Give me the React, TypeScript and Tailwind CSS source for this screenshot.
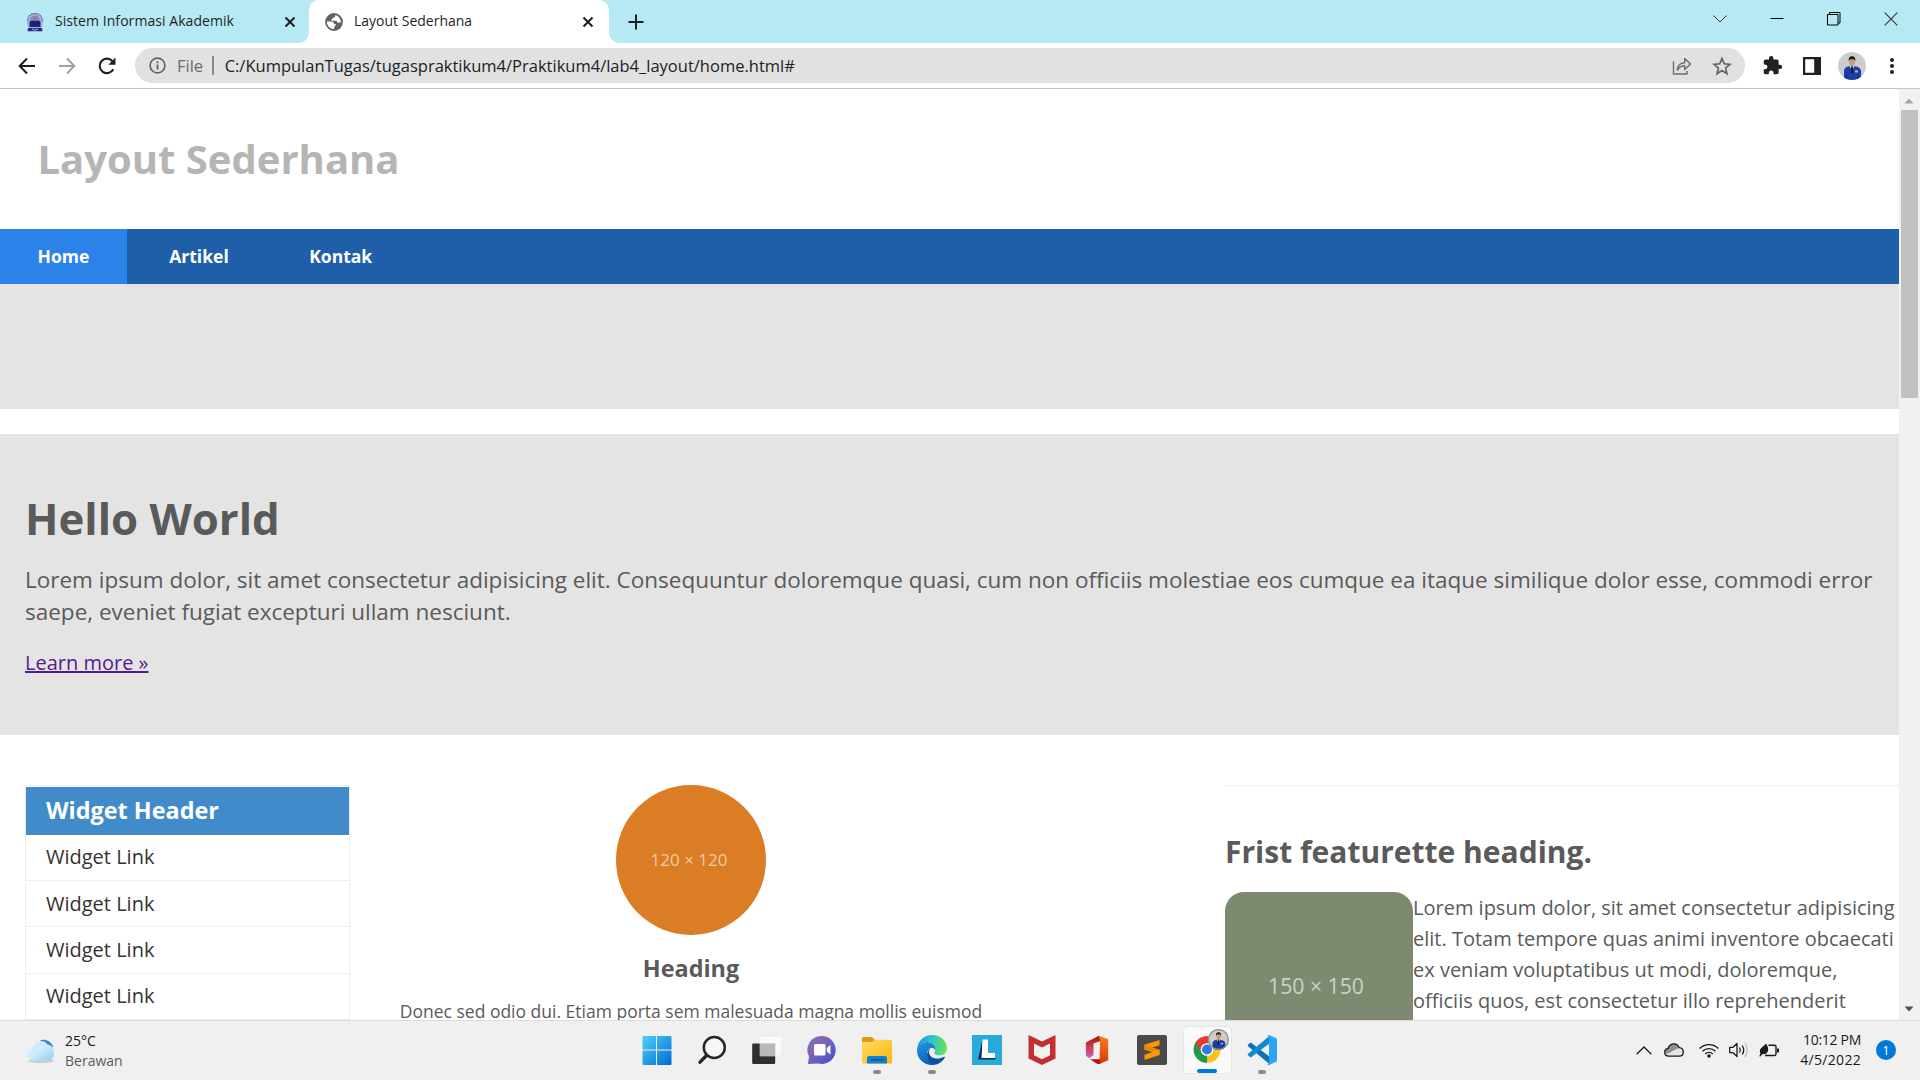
import React from "react";

/* ---------- Browser chrome icons ---------- */

const CloseX = () => (
  <svg width="12" height="12" viewBox="0 0 12 12" className="block">
    <path d="M1.5 1.5L10.5 10.5M10.5 1.5L1.5 10.5" stroke="#1f1f1f" strokeWidth="2" />
  </svg>
);

const Crest = () => (
  <svg width="20" height="20" viewBox="0 0 20 20" className="block">
    <path d="M10 0.8C5 0.8 1.8 4.6 1.8 9c0 3 .8 5.500 2 7h12.400c1.200-1.500 2-4 2-7C18.200 4.600 15 .8 10 .8z" fill="#a9b3d8" />
    <path d="M10 1.500C5.600 1.500 2.600 5 2.600 9M10 1.500c4.400 0 7.400 3.500 7.400 7.500" stroke="#5d68a5" strokeWidth="1.200" strokeDasharray="1.500 1" fill="none" />
    <circle cx="10" cy="8.200" r="4.800" fill="#7f8cc4" />
    <path d="M4.500 9.500l3.500-1 2 .8 2-.8 3.500 1V15h-11z" fill="#1d1f7c" />
    <path d="M9 8.500L10 4l1 4.500z" fill="#e2572b" />
    <path d="M3 16h14l.5 3.200h-15z" fill="#252a86" />
    <path d="M7 17l3 1.300L13 17" stroke="#d6daf0" strokeWidth=".8" fill="none" />
  </svg>
);

const Globe = () => (
  <svg width="18" height="18" viewBox="0 0 18 18" className="block">
    <circle cx="9" cy="9" r="8.900" fill="#5f6368" />
    <path d="M10.200 1.900c.6 1.500-.3 2.300-1.600 2.500-.9.200-.6 1.500-1.500 1.700-.9.200-1.200.9-.5 1.600h4c1 0 1.700.9 1.700 1.900 1.300 0 2 .2 3.600-.4 0-3.500-2.400-6.500-5.700-7.300z" fill="#fff" />
    <path d="M1.900 8.500h4.300c1.800 0 2.900 1.200 2.900 2.600h1.600c.6 1.800-1.600 2-1.700 5-4 0-7.100-3.200-7.100-7.600z" fill="#fff" />
  </svg>
);

const BackArrow = ({ color }: { color: string }) => (
  <svg width="18" height="18" viewBox="0 0 18 18" className="block">
    <path d="M17 9H2M9 1.500L1.700 9 9 16.500" stroke={color} strokeWidth="2" fill="none" />
  </svg>
);

const Reload = () => (
  <svg width="20" height="20" viewBox="0 0 20 20" className="block">
    <path d="M16.300 13.200A7.200 7.200 0 1 1 15.400 5.200" stroke="#1f1f1f" strokeWidth="2.100" fill="none" />
    <path d="M18.500 1.500V8.700H11.300z" fill="#1f1f1f" />
  </svg>
);

const InfoIcon = () => (
  <svg width="17" height="17" viewBox="0 0 17 17" className="block">
    <circle cx="8.500" cy="8.500" r="7.400" stroke="#5f6368" strokeWidth="1.700" fill="none" />
    <path d="M8.500 7.500v5M8.500 4.300v1.900" stroke="#5f6368" strokeWidth="1.800" />
  </svg>
);

const ShareIcon = () => (
  <svg width="20" height="20" viewBox="0 0 20 20" className="block">
    <path d="M1.500 5.500V18H15v-3" stroke="#6b6e72" strokeWidth="1.400" fill="none" />
    <path d="M5.300 14.300c.3-5 3.200-7.300 7.400-7.500V2.600l5.800 5.500-5.800 5.500V9.800c-3.500 0-5.500 1.500-7.400 4.500z" stroke="#6b6e72" strokeWidth="1.400" fill="none" strokeLinejoin="round" />
  </svg>
);

const StarIcon = () => (
  <svg width="20" height="20" viewBox="0 0 20 20" className="block">
    <path d="M10 2.500l2.200 5.300 5.700.5-4.300 3.700 1.300 5.600-4.900-3-4.900 3 1.300-5.600L2.100 8.300l5.700-.5z" stroke="#5f6368" strokeWidth="1.700" fill="none" />
  </svg>
);

const PuzzleIcon = () => (
  <svg width="21" height="21" viewBox="0 0 24 24" className="block">
    <path fill="#202124" d="M20.500 11H19V7c0-1.100-.9-2-2-2h-4V3.500a2.500 2.500 0 0 0-5 0V5H4c-1.100 0-2 .9-2 2v3.800h1.500c1.500 0 2.700 1.200 2.700 2.700S5 16.200 3.500 16.200H2V20c0 1.100.9 2 2 2h3.800v-1.500c0-1.500 1.200-2.700 2.700-2.700s2.700 1.200 2.700 2.700V22H17c1.100 0 2-.9 2-2v-4h1.500a2.500 2.500 0 0 0 0-5z" />
  </svg>
);

const SidePanelIcon = () => (
  <svg width="18" height="18" viewBox="0 0 18 18" className="block">
    <path d="M0 0h18v18H0zM2.200 2.300v13.400h9V2.300z" fill="#202124" fillRule="evenodd" />
  </svg>
);

const Avatar = ({ size }: { size: number }) => (
  <svg width={size} height={size} viewBox="0 0 28 28" className="block">
    <defs>
      <clipPath id={`av${size}`}>
        <circle cx="14" cy="14" r="14" />
      </clipPath>
    </defs>
    <g clipPath={`url(#av${size})`}>
      <rect width="28" height="28" fill="#cfcdcb" />
      <path d="M6 28V19c0-2.500 2-4 4-4.500l4-1 4 1c2.500.5 5 2 5 4.500v9z" fill="#1a3fa6" />
      <path d="M11.500 14l2.500 4 2.500-4z" fill="#e8e8f0" />
      <path d="M13.300 14h1.400l.6 7h-2.600z" fill="#1a1c2e" />
      <path d="M8.500 20v8M20 21v7" stroke="#0f2a7c" strokeWidth=".9" />
      <rect x="17" y="18.500" width="3" height="2" fill="#a9bdf0" />
      <ellipse cx="14" cy="9.700" rx="2.900" ry="3.900" fill="#c99a7c" />
      <path d="M10.800 9.500C10.300 6 11.500 4.300 14 4.300s3.800 1.700 3.300 5.200c-.6-2-1.400-2.600-3.300-2.600s-2.700.6-3.200 2.600z" fill="#17161a" />
    </g>
    {size < 25 && <circle cx="14" cy="14" r="13.200" fill="none" stroke="#8f8f8f" strokeWidth="1.600" />}
  </svg>
);

/* ---------- Taskbar icons ---------- */

const WindowsLogo = () => (
  <svg width="30" height="30" viewBox="0 0 30 30" className="block">
    <defs>
      <linearGradient id="win" x1="0" y1="0" x2="1" y2="1">
        <stop offset="0" stopColor="#4fd0fb" />
        <stop offset="1" stopColor="#006cd0" />
      </linearGradient>
    </defs>
    <path fill="url(#win)" d="M1.500 1H14v13.500H.5V2a1 1 0 0 1 1-1zM15 1h13.500a1 1 0 0 1 1 1v12.500H15zM.5 15.500H14V30H1.500a1 1 0 0 1-1-1zM15 15.500h14.500V29a1 1 0 0 1-1 1H15z" />
  </svg>
);

const SearchIcon = () => (
  <svg width="30" height="30" viewBox="0 0 30 30" className="block">
    <circle cx="17.300" cy="12.500" r="10.500" fill="#f7f7f7" stroke="#262626" strokeWidth="2.500" />
    <path d="M9.500 20.500L3 27.200" stroke="#262626" strokeWidth="3.300" strokeLinecap="round" />
  </svg>
);

const TaskView = () => (
  <svg width="32" height="30" viewBox="0 0 32 30" className="block">
    <rect x="1.200" y="8.500" width="23" height="20.500" rx="1.200" fill="#2f2f2d" />
    <rect x="9" y="1" width="22" height="20" rx="1" fill="#fbfbfb" fillOpacity=".9" stroke="#e2e2e2" strokeWidth=".6" />
    <path d="M9 8.500h15.200V21H10a1 1 0 0 1-1-1z" fill="#b9b9b9" />
  </svg>
);

const ChatIcon = () => (
  <svg width="30" height="30" viewBox="0 0 30 30" className="block">
    <defs>
      <linearGradient id="chat" x1="0" y1="0" x2="1" y2="1">
        <stop offset="0" stopColor="#6c7ac6" />
        <stop offset=".35" stopColor="#8a63ae" />
        <stop offset=".7" stopColor="#5b5cc9" />
        <stop offset="1" stopColor="#4749b8" />
      </linearGradient>
    </defs>
    <path d="M15 1a14 14 0 1 1-4 27.500L1 29l1-7.500A14 14 0 0 1 15 1z" fill="url(#chat)" />
    <rect x="7" y="9" width="11.500" height="11.500" rx="1.500" fill="#fff" />
    <path d="M19.800 13l3.700-3v9.500l-3.700-3z" fill="#fff" />
  </svg>
);

const FolderIcon = () => (
  <svg width="30" height="30" viewBox="0 0 30 30" className="block">
    <defs>
      <linearGradient id="fold" x1="0" y1="0" x2="1" y2="1">
        <stop offset="0" stopColor="#ffdb69" />
        <stop offset="1" stopColor="#fbb50f" />
      </linearGradient>
    </defs>
    <path d="M0 3.500A1.500 1.500 0 0 1 1.500 2H10l3 3v6H0z" fill="#dd9c0b" />
    <path d="M0 7h10l3-2.300h15.500A1.500 1.500 0 0 1 30 6.200V27a1.500 1.500 0 0 1-1.500 1.500h-27A1.500 1.500 0 0 1 0 27z" fill="url(#fold)" />
    <path d="M5 28.500V23a2 2 0 0 1 2-2h16a2 2 0 0 1 2 2v5.500z" fill="#1080d0" />
    <path d="M8.500 24.800h13" stroke="#0a4f93" strokeWidth="1.300" />
  </svg>
);

const EdgeIcon = () => (
  <svg width="30" height="30" viewBox="0 0 24 24" className="block">
    <defs>
      <linearGradient id="edgeTop" x1="0" y1=".4" x2="1" y2=".5">
        <stop offset="0" stopColor="#1b97dd" />
        <stop offset=".45" stopColor="#2fc2cf" />
        <stop offset="1" stopColor="#6be353" />
      </linearGradient>
      <linearGradient id="edgeMid" x1="0" y1="0" x2=".4" y2="1">
        <stop offset="0" stopColor="#1f9ae6" />
        <stop offset="1" stopColor="#0b63b8" />
      </linearGradient>
    </defs>
    <path d="M.05 11C.6 4.700 5.800 0 12 0c7 0 12 5.200 12 10.500 0 3.400-2.600 5.700-6 5.700-3 0-4.300-1.200-4.300-1.900 0-.6 1-1.200 1-3C14.700 8 11.500 5.600 8 5.600c-3.500 0-6.500 2-7.950 5.400z" fill="url(#edgeTop)" />
    <path d="M0 12.500C0 8.500 3.500 5.600 7.900 5.600c3.700 0 6.800 2.500 6.800 5.700l-.2 1c-.6-1.500-1.600-2.100-2.700-2.100-2.300 0-3.700 2.500-3.700 5.300 0 4.500 3.200 7.700 6.400 8.200-.8.200-1.600.3-2.500.3C5.400 24 0 18.700 0 12.500z" fill="url(#edgeMid)" />
    <path d="M8.800 13.200c.2-1.400 1-2.500 2-2.900-.8 1-1.200 2-1.200 3.200 0 3 2.700 5.300 6.800 5.300 2 0 3.700-.5 5-1.200.7-.4 1.100.1.700.8C20 21.500 17 23.700 14 23.800 10.500 23.500 8 19.800 8 16c0-1 .3-2 .8-2.800z" fill="#0d50a0" />
  </svg>
);

const LIcon = () => (
  <svg width="30" height="30" viewBox="0 0 30 30" className="block">
    <rect width="30" height="30" fill="#28aadb" />
    <path d="M10.500 4.500L6 24.500h17l1-1.500H11z" fill="#0c2c55" />
    <path d="M10.500 4.500H16V18h7v5H9.500z" fill="#fff" />
  </svg>
);

const McAfee = () => (
  <svg width="28" height="30" viewBox="0 0 28 30" className="block">
    <path d="M.5 0L14 6.500 27.500 0v23.500L14 30 .5 23.500zM6 8.500v11.800l8 4 8-4V8.500l-8 4z" fill="#c22f2e" fillRule="evenodd" />
  </svg>
);

const OfficeIcon = () => (
  <svg width="24" height="30" viewBox="0 0 24 30" className="block">
    <defs>
      <linearGradient id="off" x1="0" y1="0" x2="0" y2="1">
        <stop offset="0" stopColor="#a3120c" />
        <stop offset=".5" stopColor="#d5394a" />
        <stop offset="1" stopColor="#b869c4" />
      </linearGradient>
      <linearGradient id="off2" x1="0" y1="0" x2="0" y2="1">
        <stop offset="0" stopColor="#f5811e" />
        <stop offset="1" stopColor="#d63a05" />
      </linearGradient>
    </defs>
    <path d="M.8 7.500L14 .8 15.500 6 8.500 8.500V20L4.500 23 1 21z" fill="url(#off)" />
    <path d="M14 .8l9.200 3.500v21L14.500 29l.5-24z" fill="url(#off2)" />
    <path d="M5 24.200h10V29h-2.500z" fill="#b3140f" />
  </svg>
);

const SublimeIcon = () => (
  <svg width="30" height="30" viewBox="0 0 30 30" className="block">
    <rect width="30" height="30" rx="2" fill="#4a4a4a" />
    <path d="M22.500 5v5.200L7.500 15V9.800z" fill="#ff9800" />
    <path d="M7.500 9.800l15 5v5l-15-5z" fill="#e88a00" />
    <path d="M22.500 14.800V20l-15 5v-5.200z" fill="#ff9800" />
  </svg>
);

const ChromeIcon = () => (
  <svg width="28" height="28" viewBox="0 0 28 28" className="block">
    <path d="M14 14L1.880 7A14 14 0 0 1 26.120 7z" fill="#e33b2e" />
    <path d="M14 14L26.120 7A14 14 0 0 1 14 28z" fill="#fcc31e" />
    <path d="M14 14v14A14 14 0 0 1 1.880 7z" fill="#229a4b" />
    <path d="M14 7.500h12.400l-6.700 10z" fill="#fcc31e" />
    <path d="M8.400 17.200L1.880 7l6-1L14 7.500z" fill="#e33b2e" />
    <path d="M1.880 7l6.500 10.300 3 2.500-2 3z" fill="#229a4b" />
    <circle cx="14" cy="14" r="6.600" fill="#fff" />
    <circle cx="14" cy="14" r="5.200" fill="#2b79ee" />
  </svg>
);

const VSCodeIcon = () => (
  <svg width="30" height="30" viewBox="0 0 30 30" className="block">
    <path d="M1 9.800l2-1.700c.5-.4 1-.3 1.500 0L23 22v7.500L1 11.200c-.5-.5-.5-1 0-1.400z" fill="#0e72b9" />
    <path d="M1 20.200l2 1.700c.5.400 1 .3 1.500 0L23 8V.5L1 18.800c-.5.5-.5 1 0 1.400z" fill="#1489d0" />
    <path d="M22 0l6.800 3c.8.400 1.200 1 1.200 1.800v20.400c0 .8-.4 1.400-1.200 1.800L22 30c-.6.200-1 .1-1.500-.4L22 28V2L20.500.4C21 0 21.400-.2 22 0z" fill="#2ba5f3" />
  </svg>
);

const CloudWeather = () => (
  <svg width="30" height="26" viewBox="0 0 30 26" className="block">
    <defs>
      <linearGradient id="cw" x1="0" y1="0" x2="1" y2="1">
        <stop offset="0" stopColor="#d5effd" />
        <stop offset=".5" stopColor="#cdebfb" />
        <stop offset="1" stopColor="#8ecdf0" />
      </linearGradient>
    </defs>
    <ellipse cx="15" cy="23" rx="13" ry="2" fill="#cfcfcf" />
    <path d="M14 2.500c5-2 11 .5 13 6l-2 3-7-3z" fill="#3f86c8" />
    <path d="M7 22.500c-4 0-6-2.500-6-5.300 0-2.700 2-4.700 4.500-5C6.500 7 9.500 3 14 3c4.500 0 6 1.500 7.800 3.700 4 .6 6.200 3.300 6.200 8.500 0 4.300-2.500 7.300-6 7.300z" fill="url(#cw)" />
  </svg>
);

const taskbarApps: { icon: React.ReactNode; dot?: boolean }[] = [
  { icon: <WindowsLogo /> },
  { icon: <SearchIcon /> },
  { icon: <TaskView /> },
  { icon: <ChatIcon /> },
  { icon: <FolderIcon />, dot: true },
  { icon: <EdgeIcon />, dot: true },
  { icon: <LIcon /> },
  { icon: <McAfee /> },
  { icon: <OfficeIcon /> },
  { icon: <SublimeIcon /> },
];

/* ---------- Sections ---------- */

function TabStrip() {
  return (
    <div className="flex h-[43px] bg-[#b6e9f3] text-[14px] leading-[20px] text-[#1f1f1f]">
      <div className="flex h-full w-[309px] items-center rounded-br-[10px] pl-[25px]">
        <Crest />
        <span className="ml-[10px] w-[220px] pb-px tracking-[0.06px] whitespace-nowrap">Sistem Informasi Akademik</span>
        <span className="ml-[9px]"><CloseX /></span>
      </div>
      <div className="relative flex h-full w-[300px] items-center rounded-t-[10px] bg-white pl-[16px]">
        <span className="absolute bottom-0 -left-[10px] h-[10px] w-[10px] bg-[radial-gradient(circle_at_0_0,#b6e9f3_9.5px,#fff_10px)]" />
        <span className="absolute -right-[10px] bottom-0 h-[10px] w-[10px] bg-[radial-gradient(circle_at_100%_0,#b6e9f3_9.5px,#fff_10px)]" />
        <Globe />
        <span className="ml-[11px] w-[220px] pb-px whitespace-nowrap">Layout Sederhana</span>
        <span className="ml-[8px]"><CloseX /></span>
      </div>
      <div className="flex items-center pl-[19px]">
        <svg width="16" height="16" viewBox="0 0 16 16" className="block">
          <path d="M8 .5v15M.5 8h15" stroke="#1f1f1f" strokeWidth="2" />
        </svg>
      </div>
      <div className="mr-px ml-auto flex h-[37px] items-center">
        <span className="flex w-[57px] justify-center">
          <svg width="14" height="8" viewBox="0 0 14 8"><path d="M.5 .5L7 7 13.500.5" stroke="#333" fill="none" /></svg>
        </span>
        <span className="flex w-[57px] justify-center">
          <svg width="14" height="2" viewBox="0 0 14 2"><path d="M.5 .5h13" stroke="#000" strokeWidth="1" /></svg>
        </span>
        <span className="flex w-[57px] justify-center">
          <svg width="14" height="14" viewBox="0 0 14 14">
            <path d="M.5 2.500h10.500v10.500H.5zM2.500 2.500v-2h10.500v10.500h-2" stroke="#000" fill="none" />
          </svg>
        </span>
        <span className="flex w-[57px] justify-center">
          <svg width="14" height="14" viewBox="0 0 14 14"><path d="M.7 .7l12.600 12.600M13.300.7L.7 13.300" stroke="#333" strokeWidth="1.100" /></svg>
        </span>
      </div>
    </div>
  );
}

function Toolbar() {
  return (
    <div className="flex h-[46px] items-center border-b border-[#c6c6c6] bg-white">
      <div className="ml-[18px]"><BackArrow color="#1f1f1f" /></div>
      <div className="ml-[22px] rotate-180"><BackArrow color="#a0a0a0" /></div>
      <div className="ml-[21px]"><Reload /></div>
      <div className="ml-[18px] flex h-[35px] w-[1610px] items-center rounded-full bg-[#e1e1e1] pr-[13px] pl-[14px] text-[16.500px] leading-[24px]">
        <InfoIcon />
        <span className="ml-[11px] text-[#6b6b6b]">File</span>
        <span className="ml-[9px] h-[19px] w-[1.500px] bg-[#8a8a8a]" />
        <span className="ml-[11px] text-[#202124]">C:/KumpulanTugas/tugaspraktikum4/Praktikum4/lab4_layout/home.html#</span>
        <span className="mr-[20px] ml-auto"><ShareIcon /></span>
        <StarIcon />
      </div>
      <div className="ml-[17px]"><PuzzleIcon /></div>
      <div className="ml-[20px]"><SidePanelIcon /></div>
      <div className="ml-[17px]"><Avatar size={28} /></div>
      <div className="ml-[24px] flex flex-col gap-[2px]">
        <i className="h-[4px] w-[4px] rounded-full bg-[#202124]" />
        <i className="h-[4px] w-[4px] rounded-full bg-[#202124]" />
        <i className="h-[4px] w-[4px] rounded-full bg-[#202124]" />
      </div>
    </div>
  );
}

function PageScrollbar() {
  return (
    <div className="flex w-[21px] flex-col items-center bg-[#f1f1f1] pr-px">
      <svg width="10" height="6" viewBox="0 0 10 6" className="mt-[9px] block"><path d="M5 0.500L9.500 5.500H.5z" fill="#a3a3a3" /></svg>
      <div className="mt-[6px] h-[288px] w-[17px] bg-[#c1c1c1]" />
      <svg width="10" height="6" viewBox="0 0 10 6" className="mt-auto mb-[8px] block"><path d="M5 5.500L9.500 .5H.5z" fill="#505050" /></svg>
    </div>
  );
}

function WebPage() {
  return (
    <div className="h-full min-w-0 flex-1 overflow-hidden bg-white text-[#5a5a5a]">
      <header className="h-[140px] pt-[43px] pl-[37.500px]">
        <h1 className="text-[40px] leading-[54px] font-bold text-[#b5b5b5]">Layout Sederhana</h1>
      </header>
      <nav className="flex h-[55px] gap-[5px] bg-[#1f5faa] text-[17.500px] leading-[55px] font-bold text-white">
        <a className="bg-[#2b83ea] px-[37.500px]">Home</a>
        <a className="px-[37.500px]">Artikel</a>
        <a className="pr-[37.500px] pl-[38px]">Kontak</a>
      </nav>
      <div className="h-[125px] bg-[#e4e4e4]" />
      <section className="mt-[25px] h-[301px] bg-[#e4e4e4] px-[25px] pt-[54px]">
        <h1 className="text-[43.750px] leading-[60px] font-bold">Hello World</h1>
        <p className="mt-[16px] text-[22.500px] leading-[32px]">
          Lorem ipsum dolor, sit amet consectetur adipisicing elit. Consequuntur doloremque quasi, cum non officiis molestiae eos cumque ea itaque similique dolor esse, commodi error saepe, eveniet fugiat excepturi ullam nesciunt.
        </p>
        <p className="mt-[20px] text-[20px] leading-[30px]">
          <a className="text-[#551a8b] underline">Learn more »</a>
        </p>
      </section>
      <div className="flex pt-[50px] pl-[25px]">
        <aside className="h-[300px] w-[325px] shrink-0 border border-[#eee] pt-px">
          <h3 className="h-[48px] bg-[#428bca] pl-[20px] text-[23.400px] leading-[47px] font-bold text-white">Widget Header</h3>
          <ul className="text-[20px] text-[#333]">
            <li className="h-[46px] border-b border-[#eee] pl-[20px] leading-[43px]">Widget Link</li>
            <li className="h-[46px] border-b border-[#eee] pl-[20px] leading-[46px]">Widget Link</li>
            <li className="h-[47px] border-b border-[#eee] pl-[20px] leading-[46px]">Widget Link</li>
            <li className="h-[46px] border-b border-[#eee] pl-[20px] leading-[44px]">Widget Link</li>
          </ul>
        </aside>
        <div className="ml-[50px] flex w-[582px] shrink-0 flex-col items-center">
          <div className="flex h-[150px] w-[150px] items-center justify-center rounded-full bg-[#da7d24] pr-[4px] text-[17px] leading-[24px] text-[#f0cba8]">120 × 120</div>
          <h3 className="mt-[17px] text-[23.400px] leading-[32px] font-bold">Heading</h3>
          <p className="mt-[13px] text-[17.500px] leading-[28px] whitespace-nowrap">Donec sed odio dui. Etiam porta sem malesuada magna mollis euismod</p>
        </div>
        <div className="ml-auto w-[674px] border-t border-[#eee]">
          <h2 className="mt-[46px] text-[30px] leading-[40px] font-bold">Frist featurette heading.</h2>
          <div className="mt-[20px] flex">
            <div className="flex h-[188px] w-[188px] shrink-0 items-center justify-center rounded-[19px] bg-[#7d8a70] pr-[6px] text-[21.200px] leading-[30px] text-[#ccd2c6]">150 × 150</div>
            <p className="text-[20px] leading-[31px]">
              Lorem ipsum dolor, sit amet consectetur adipisicing<br />
              elit. Totam tempore quas animi inventore obcaecati<br />
              ex veniam voluptatibus ut modi, doloremque,<br />
              officiis quos, est consectetur illo reprehenderit
            </p>
          </div>
        </div>
      </div>
    </div>
  );
}

function Taskbar() {
  return (
    <div className="flex h-[60px] shrink-0 border-t border-[#dcdcdc] bg-[#f0f0f0]">
      <div className="flex w-[629.500px] items-center pl-[26px]">
        <CloudWeather />
        <div className="ml-[9px] text-[14px] leading-[20px]">
          <div className="text-[#1a1a1a]">25°C</div>
          <div className="text-[#5c5c5c]">Berawan</div>
        </div>
      </div>
      <div className="flex">
        {taskbarApps.map((app, i) => (
          <div key={i} className="flex w-[55px] flex-col items-center pt-[14px]">
            {app.icon}
            {app.dot && <span className="mt-[5px] h-[4px] w-[8px] rounded-full bg-[#8a8a8a]" />}
          </div>
        ))}
        <div className="flex w-[55px] justify-center pt-[5px]">
          <div className="relative flex h-[48px] w-[49px] flex-col items-center rounded-[5px] border border-[#e6e6e6] bg-[#fafafa] pt-[9px]">
            <ChromeIcon />
            <span className="absolute top-[2px] right-[2px]"><Avatar size={21} /></span>
            <span className="mt-[6px] h-[4px] w-[20px] shrink-0 rounded-full bg-[#0078d7]" />
          </div>
        </div>
        <div className="flex w-[55px] flex-col items-center pt-[14px]">
          <VSCodeIcon />
          <span className="mt-[5px] h-[4px] w-[8px] rounded-full bg-[#8a8a8a]" />
        </div>
      </div>
      <div className="ml-auto flex items-center pr-[24px] pb-px">
        <svg width="16" height="9" viewBox="0 0 16 9" className="block"><path d="M.7 8.300L8 1l7.300 7.300" stroke="#1a1a1a" strokeWidth="1.300" fill="none" /></svg>
        <svg width="20" height="14" viewBox="0 0 20 14" className="ml-[12px] block">
          <path d="M4.800 13.200C2.300 13.200.7 11.600.7 9.300c0-2.100 1.400-3.600 3.300-3.900C5 2.700 6.900.8 9.800.8c2.700 0 4.500 1.500 5.400 3.900 2.300.2 4.100 1.900 4.100 4.300 0 2.500-1.700 4.200-4.100 4.200z" fill="#e4e4e4" />
          <path d="M1 9.500C1 7 2.500 5.500 4 5.400 5 2.700 6.900.8 9.800.8c2.700 0 4.500 1.500 5.400 3.900L11.500 6.500 3 11z" fill="#8f8f8f" />
          <path d="M4.800 13.200C2.300 13.200.7 11.600.7 9.300c0-2.100 1.400-3.600 3.300-3.900C5 2.700 6.900.8 9.800.8c2.700 0 4.500 1.500 5.400 3.900 2.300.2 4.100 1.900 4.100 4.300 0 2.500-1.700 4.200-4.100 4.200z" fill="none" stroke="#1a1a1a" strokeWidth="1.300" />
        </svg>
        <svg width="20" height="15" viewBox="0 0 20 15" className="ml-[15px] block">
          <g fill="none" stroke="#1a1a1a" strokeWidth="1.400">
            <path d="M.7 5.500a13.200 13.200 0 0 1 18.600 0" />
            <path d="M3.500 8.300a9.200 9.200 0 0 1 13 0" />
            <path d="M6.200 11a5.300 5.300 0 0 1 7.600 0" />
          </g>
          <circle cx="10" cy="13" r="1.800" fill="#1a1a1a" />
        </svg>
        <svg width="20" height="16" viewBox="0 0 20 16" className="ml-[10px] block">
          <path d="M.7 5.300H4L8 1.500v13L4 10.700H.7z" fill="none" stroke="#1a1a1a" strokeWidth="1.300" strokeLinejoin="round" />
          <path d="M10.500 5.500q1.600 2.500 0 5M13.200 3.500q3 4.500 0 9" fill="none" stroke="#1a1a1a" strokeWidth="1.300" />
          <path d="M16 1.200q4.500 6.800 0 13.600" fill="none" stroke="#bdbdbd" strokeWidth="1.300" />
        </svg>
        <svg width="20" height="15" viewBox="0 0 20 15" className="ml-[10px] block">
          <path d="M9.500 2.200H15.500a1.500 1.500 0 0 1 1.500 1.500v7.300a1.500 1.500 0 0 1-1.500 1.500H6" fill="none" stroke="#1a1a1a" strokeWidth="1.400" />
          <path d="M18 5.500h2v4h-2z" fill="#1a1a1a" />
          <path d="M7 .5c2 3 2.700 5.500 1.800 8-.7 2-2.800 3-5.300 2.500L1 13.800.4 13l1-2.500C-.5 5.500 3.500 4.500 7 .5z" fill="#1a1a1a" />
        </svg>
        <div className="ml-[22px] flex w-[60px] flex-col items-end text-[14px] leading-[20px] whitespace-nowrap text-[#1a1a1a]">
          <span className="tracking-[-0.3px]">10:12 PM</span>
          <span className="tracking-[0.3px]">4/5/2022</span>
        </div>
        <div className="ml-[15px] flex h-[20px] w-[20px] items-center justify-center rounded-full bg-[#0078d7] text-[13px] leading-[20px] text-white">1</div>
      </div>
    </div>
  );
}

export default function App() {
  return (
    <div className="flex h-[1080px] w-[1920px] flex-col overflow-hidden bg-white font-['Open_Sans',sans-serif]">
      <TabStrip />
      <Toolbar />
      <div className="flex min-h-0 flex-1">
        <WebPage />
        <PageScrollbar />
      </div>
      <Taskbar />
    </div>
  );
}
